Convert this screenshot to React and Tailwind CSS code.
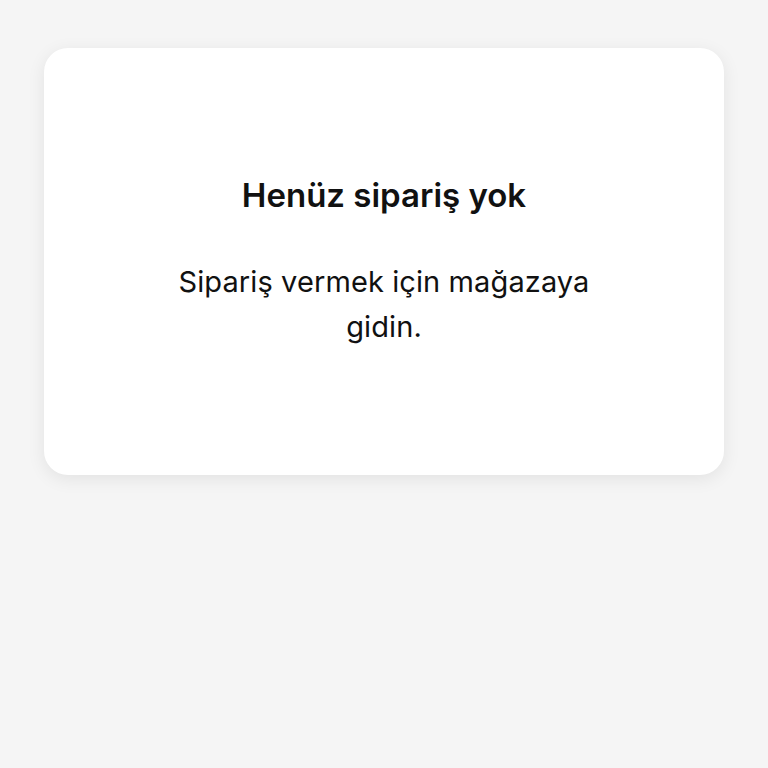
import React from 'react';

const App = () => {
  return (
    <div
      className="min-h-[768px] w-full bg-[#f5f5f5] px-[44px] pt-[48px]"
      style={{ fontFamily: 'Inter, "Noto Sans", sans-serif' }}
    >
      <div className="flex h-[427px] flex-col items-center justify-center rounded-[24px] bg-white shadow-[0_4px_18px_rgba(0,0,0,0.08)]">
        <h2 className="text-[33px] font-semibold leading-[40px] text-[#111]">Henüz sipariş yok</h2>
        <p className="mt-[44px] max-w-[460px] text-center text-[29px] leading-[45px] tracking-[0.1px] text-[#111]">
          Sipariş vermek için mağazaya gidin.
        </p>
      </div>
    </div>
  );
};

export default App;
